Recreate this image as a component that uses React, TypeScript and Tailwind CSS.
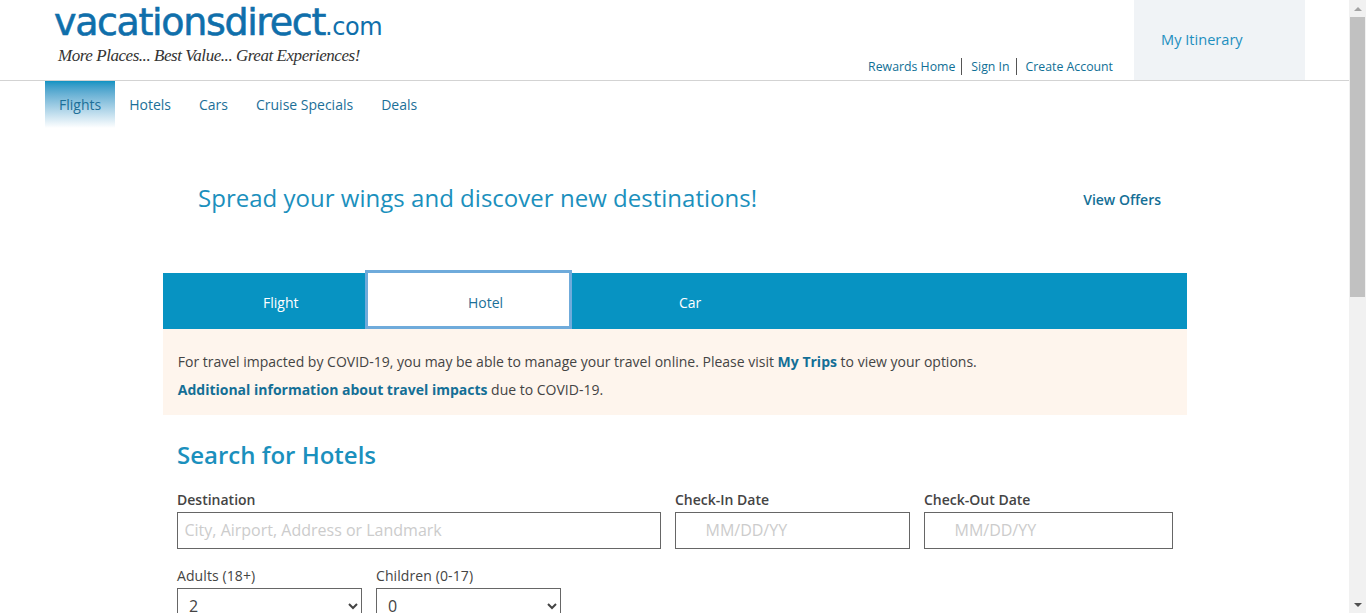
import React from 'react';

const navItems = ['Flights', 'Hotels', 'Cars', 'Cruise Specials', 'Deals'];

const Field: React.FC<{ label: string; width: string; placeholder: string; indent?: boolean }> = ({ label, width, placeholder, indent }) => (
  <div className={`${width} flex flex-col`}>
    <label className="h-[25px] text-[14px] leading-[25px] font-semibold text-[#444]">{label}</label>
    <input
      readOnly
      placeholder={placeholder}
      className={`h-[37px] w-full border border-[#666] bg-white pb-[2px] text-[16px] outline-none placeholder:text-[#ccc] ${indent ? 'pl-[29.5px]' : 'pl-[6.5px]'}`}
    />
  </div>
);

const Counter: React.FC<{ label: string; value: string }> = ({ label, value }) => (
  <div className="flex w-[185px] flex-col">
    <label className="h-[25px] text-[14px] leading-[25px] font-medium tracking-[0.1px] text-[#444]">{label}</label>
    <select defaultValue={value} className="h-[37px] w-full border border-[#666] bg-white pb-[2px] pl-[7px] text-[16px] text-[#444] outline-none">
      <option value={value}>{value}</option>
    </select>
  </div>
);

const App: React.FC = () => {
  return (
    <div className="flex h-[613px] w-[1366px] overflow-hidden bg-white font-['Open_Sans',sans-serif]">
      <div className="w-[1349px] shrink-0">
        <header className="flex h-[81px] border-b border-[#d3d3d3]">
          <div className="w-[821px] pl-[54px]">
            <div className="flex h-[45px] items-baseline whitespace-nowrap font-['DejaVu_Sans',sans-serif] text-[#0f6fab]">
              <span className="text-[38px] leading-[45px] tracking-[-1.35px] [-webkit-text-stroke:0.6px_#0f6fab]">vacationsdirect</span>
              <span className="text-[24px] leading-[45px] tracking-[-0.4px]">.com</span>
            </div>
            <div className="whitespace-nowrap pl-[4px] font-['Liberation_Serif',serif] text-[17px] leading-[22px] tracking-[-0.45px] text-[#333] italic">More Places... Best Value... Great Experiences!</div>
          </div>
          <div className="flex w-[313px] items-start justify-end pt-[58px] pr-[21px] text-[12.3px] text-[#0f6f96]">
            <a className="h-[17px] border-r border-[#555] pr-[6px] leading-[17px]">Rewards Home</a>
            <a className="h-[17px] border-r border-[#555] pr-[6px] pl-[9px] leading-[17px]">Sign In</a>
            <a className="h-[17px] pl-[9px] leading-[17px]">Create Account</a>
          </div>
          <div className="h-[80px] w-[171px] bg-[#f0f3f6] pt-[29px] pl-[27px] text-[14.6px] leading-[20px] font-medium text-[#1e8fbf]">My Itinerary</div>
        </header>

        <nav className="flex h-[47px] pl-[45px] text-[14px] text-[#1c6f98]">
          {navItems.map((item, i) => (
            <a key={item} className={`px-[14px] pt-[14px] leading-[20px] ${i === 0 ? 'bg-gradient-to-b from-[#0a93c3] to-white' : ''}`}>{item}</a>
          ))}
        </nav>

        <section className="ml-[163px] flex w-[1024px] items-start justify-between pt-[53px] pr-[26px] pl-[35px]">
          <h2 className="text-[24px] leading-[33px] tracking-[0.02px] text-[#1b90bd]">Spread your wings and discover new destinations!</h2>
          <a className="mt-[9px] text-[14px] leading-[20px] font-semibold text-[#146f96]">View Offers</a>
        </section>

        <div className="mt-[59px] ml-[163px] flex h-[56px] w-[1024px] bg-[#0793c2] text-[14px] text-white">
          <div className="w-[202px] pt-[20px] pl-[100px] leading-[20px]">Flight</div>
          <div className="relative -mt-[3px] h-[59px] w-[207px] border-[3px] border-[#6fabdb] bg-white pt-[20px] pl-[100px] leading-[20px] text-[#1c6f98]">Hotel</div>
          <div className="pt-[20px] pl-[107px] leading-[20px]">Car</div>
        </div>

        <div className="ml-[163px] h-[86px] w-[1024px] bg-[#fef5ed] px-[14.75px] pt-[19px] text-[14px] leading-[28px] text-[#444]">
          <p>For travel impacted by COVID-19, you may be able to manage your travel online. Please visit <b className="font-bold text-[#146f96]">My Trips</b> to view your options.</p>
          <p><b className="font-bold text-[#146f96]">Additional information about travel impacts</b> due to COVID-19.</p>
        </div>

        <form className="ml-[163px] w-[1024px] px-[14px]">
          <h3 className="pt-[23px] pb-[16px] text-[24px] leading-[33px] font-semibold text-[#1b90bd]">Search for Hotels</h3>
          <div className="flex gap-[14px]">
            <Field label="Destination" width="w-[484px]" placeholder="City, Airport, Address or Landmark" />
            <Field label="Check-In Date" width="w-[235px]" placeholder="MM/DD/YY" indent />
            <Field label="Check-Out Date" width="w-[249px]" placeholder="MM/DD/YY" indent />
          </div>
          <div className="mt-[14px] flex gap-[14px]">
            <Counter label="Adults (18+)" value="2" />
            <Counter label="Children (0-17)" value="0" />
          </div>
        </form>
      </div>

      {/* page scrollbar */}
      <div className="flex h-full w-[17px] flex-col bg-[#f1f1f1]">
        <div className="flex h-[17px] items-center justify-center">
          <div className="h-0 w-0 border-x-[4px] border-b-[4px] border-x-transparent border-b-[#a3a3a3]" />
        </div>
        <div className="mx-auto h-[280px] w-[15px] bg-[#c1c1c1]" />
        <div className="flex-1" />
        <div className="flex h-[17px] items-center justify-center">
          <div className="h-0 w-0 border-x-[4px] border-t-[4px] border-x-transparent border-t-[#505050]" />
        </div>
      </div>
    </div>
  );
};

export default App;
